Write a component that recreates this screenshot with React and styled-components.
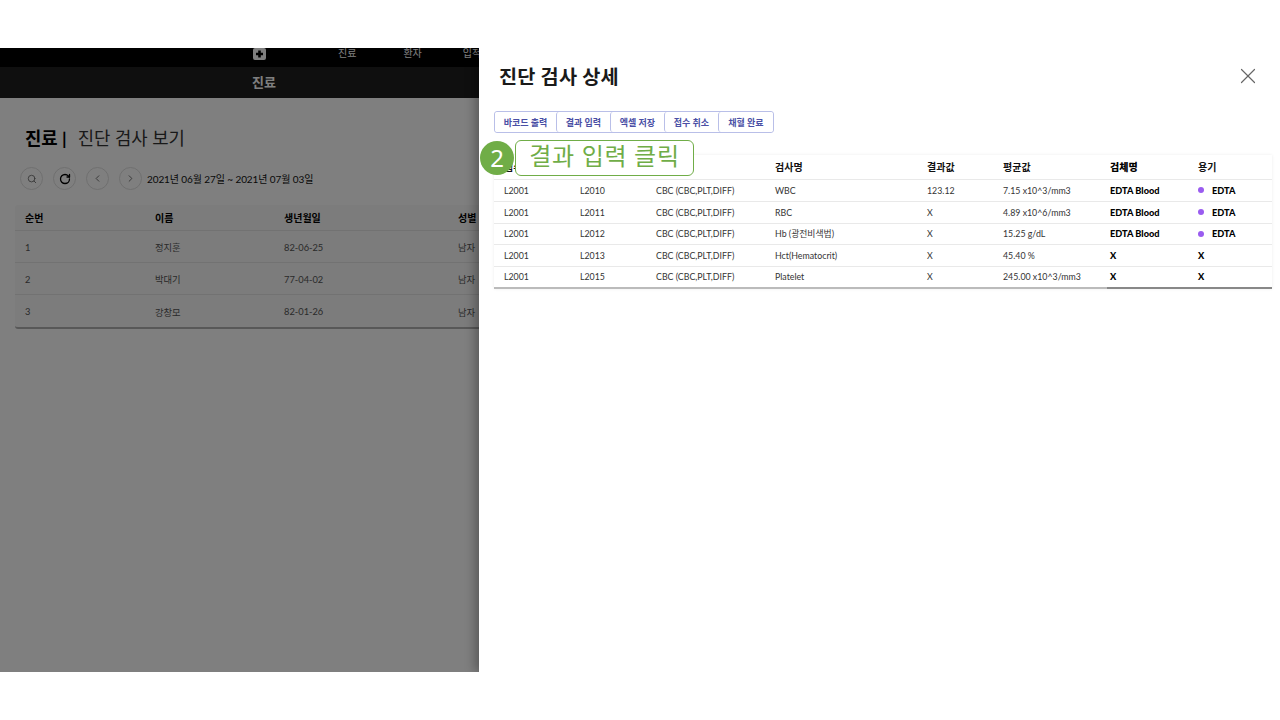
import React from 'react';
import styled, { createGlobalStyle } from 'styled-components';
import { Search, RotateCw, ChevronLeft, ChevronRight, X } from 'lucide-react';

const GlobalStyle = createGlobalStyle`
    html, body { margin: 0; padding: 0; background: #fff; }
    body { font-family: Lato, "Noto Sans CJK KR", sans-serif; }
`

const Stage = styled.div`
    position: relative;
    display: flex;
    width: 1280px;
    height: 624px;
    margin-top: 48px;
    overflow: hidden;
`

const Page = styled.div`
    position: relative;
    flex: 0 0 479px;
    overflow: hidden;
    background: #fff;
`

const Dim = styled.div`
    position: absolute;
    inset: 0;
    background: rgba(0, 0, 0, 0.5);
`

const TopNav = styled.div`
    display: flex;
    height: 19px;
    background: #000;
    color: #fff;
    font-size: 10px;
    line-height: 11px;
    width: 600px;
`

const NavIcon = styled.svg`
    margin: 0 0 0 253px;
    width: 13px;
    height: 12px;
`

const NavLink = styled.span`
    margin-left: ${p => p.$gap}px;
    white-space: nowrap;
`

const TitleBar = styled.div`
    height: 31px;
    width: 528px;
    background: #1f1f1f;
    color: #fff;
    font-size: 13px;
    font-weight: 700;
    line-height: 31px;
    text-align: center;
`

const PageBody = styled.div`
    padding: 26px 0 0 15px;
    width: 700px;
`

const Heading = styled.h2`
    margin: 0 0 0 10px;
    font-size: 17.8px;
    line-height: 28px;
    font-weight: 400;
    color: #333;
    b { font-weight: 700; color: #000; margin-right: 11px; }
`

const Controls = styled.div`
    display: flex;
    align-items: center;
    gap: 10px;
    margin: 15px 0 0 5px;
    font-size: 10px;
    color: #111;
`

const Round = styled.span`
    display: flex;
    align-items: center;
    justify-content: center;
    width: 23px;
    height: 23px;
    border: 1px solid #dedede;
    border-radius: 50%;
    color: ${p => p.$dark ? '#000' : '#666'};
    box-sizing: border-box;
`

const DateText = styled.span`
    margin-left: -5px;
    letter-spacing: -0.1px;
`

const ListTable = styled.div`
    margin-top: 15px;
    background: #f8f8f8;
    border-bottom: 2px solid #b0b0b0;
    border-radius: 3px;
    font-size: 9.3px;
    color: #555;
`

const ListRow = styled.div`
    display: grid;
    grid-template-columns: 130px 129px 174px 1fr;
    align-items: center;
    box-sizing: border-box;
    height: ${p => p.$head ? 26 : 32}px;
    padding-left: 10px;
    padding-top: ${p => p.$head ? 0 : 1}px;
    border-bottom: ${p => p.$last ? 0 : 1}px solid #e4e4e4;
    ${p => p.$head && 'color: #000; font-weight: 700; font-size: 10px;'}
`

const Drawer = styled.section`
    position: relative;
    flex: 1;
    background: #fff;
    box-shadow: -4px 0 10px rgba(0, 0, 0, 0.3);
    padding: 12px 8px 0 15px;
`

const DrawerHead = styled.header`
    display: flex;
    justify-content: space-between;
    align-items: center;
    height: 30px;
    padding: 0 11px 0 5px;
`

const DrawerTitle = styled.h1`
    margin: 0;
    font-size: 19.7px;
    font-weight: 700;
    color: #1a1a1a;
    letter-spacing: 0.2px;
`

const Close = styled.span`
    display: flex;
    margin-top: 2px;
    color: #666;
`

const ButtonGroup = styled.div`
    display: inline-flex;
    margin-top: 21px;
    border: 1px solid #b9bfe8;
    border-radius: 3px;
    height: 22px;
    box-sizing: border-box;
`

const GroupButton = styled.button`
    width: ${p => p.$w}px;
    padding: 0;
    background: #fff;
    border: 0;
    border-left: ${p => p.$first ? 0 : 1}px solid #b9bfe8;
    border-radius: 3px;
    color: #4a4fa5;
    font-family: inherit;
    font-size: 9px;
    font-weight: 700;
`

const DetailTable = styled.div`
    margin-top: 22px;
    font-size: 8.8px;
    color: #333;
    box-shadow: 0 0 3px rgba(0, 0, 0, 0.08);
`

const DetailRow = styled.div`
    position: relative;
    display: grid;
    grid-template-columns: 76px 76px 119px 152px 76px 107px 88px 1fr;
    align-items: center;
    height: ${p => p.$head ? 25 : 21.75}px;
    padding-left: 10px;
    border-bottom: 1px solid ${p => p.$last ? '#bbb' : '#e9e9e9'};
    ${p => p.$head && 'color: #111; font-weight: 700; font-size: 10px; padding-bottom: 2px;'}
    ${p => p.$last && 'border-bottom-width: 2px;'}
    box-sizing: border-box;
    ${p => p.$last && `
        &::after {
            content: "";
            position: absolute;
            right: 0;
            bottom: -2px;
            width: 165px;
            height: 2px;
            background: #888;
        }
    `}
`

const Strong = styled.span`
    color: #000;
    font-size: ${p => p.$head ? 10 : 9.2}px;
    font-weight: 900;
    display: flex;
    align-items: center;
`

const Dot = styled.i`
    width: 6px;
    height: 6px;
    border-radius: 50%;
    margin-right: 8px;
    background: #9a5cf0;
`

const Callout = styled.div`
    position: absolute;
    left: 1px;
    top: 92px;
    display: flex;
    align-items: center;
`

const Badge = styled.span`
    width: 34px;
    height: 34px;
    border-radius: 50%;
    background: #70ad47;
    color: #fff;
    font-family: "Noto Sans", sans-serif;
    font-size: 24px;
    line-height: 34px;
    text-align: center;
`

const CalloutText = styled.span`
    width: 179px;
    height: 36px;
    margin-left: 1px;
    border: 1px solid #70ad47;
    border-radius: 6px;
    background: #fff;
    color: #70ad47;
    box-sizing: border-box;
    font-size: 24px;
    font-weight: 400;
    line-height: 29px;
    text-align: center;
    letter-spacing: 0.7px;
    white-space: nowrap;
`

const patients = [
    ['1', '정지훈', '82-06-25', '남자'],
    ['2', '박대기', '77-04-02', '남자'],
    ['3', '강창모', '82-01-26', '남자'],
]

const buttons = [['바코드 출력', 61], ['결과 입력', 54], ['엑셀 저장', 54], ['접수 취소', 54], ['채혈 완료', 55]]

const panel = 'CBC (CBC,PLT,DIFF)'
const results = [
    ['L2001', 'L2010', panel, 'WBC', '123.12', '7.15 x10^3/mm3', 'EDTA Blood', 'EDTA'],
    ['L2001', 'L2011', panel, 'RBC', 'X', '4.89 x10^6/mm3', 'EDTA Blood', 'EDTA'],
    ['L2001', 'L2012', panel, 'Hb (광전비색법)', 'X', '15.25 g/dL', 'EDTA Blood', 'EDTA'],
    ['L2001', 'L2013', panel, 'Hct(Hematocrit)', 'X', '45.40 %', 'X', 'X'],
    ['L2001', 'L2015', panel, 'Platelet', 'X', '245.00 x10^3/mm3', 'X', 'X'],
]

function App() {
    return (
        <Stage>
            <GlobalStyle />
            <Page>
                <TopNav>
                    <NavIcon viewBox="0 0 13 12">
                        <path fillRule="evenodd" fill="#fff" d="M2 0h9a2 2 0 0 1 2 2v8a2 2 0 0 1-2 2H2a2 2 0 0 1-2-2V2a2 2 0 0 1 2-2zM5.2 2.5v2.2H3v2.6h2.2v2.2h2.6V7.3H10V4.7H7.8V2.5z" />
                    </NavIcon>
                    <NavLink $gap={72}>진료</NavLink>
                    <NavLink $gap={47}>환자</NavLink>
                    <NavLink $gap={41}>입적</NavLink>
                </TopNav>
                <TitleBar>진료</TitleBar>
                <PageBody>
                    <Heading><b>진료 |</b>진단 검사 보기</Heading>
                    <Controls>
                        <Round><Search size={10} /></Round>
                        <Round $dark><RotateCw size={12} strokeWidth={2.6} /></Round>
                        <Round><ChevronLeft size={11} /></Round>
                        <Round><ChevronRight size={11} /></Round>
                        <DateText>2021년 06월 27일 ~ 2021년 07월 03일</DateText>
                    </Controls>
                    <ListTable>
                        <ListRow $head>
                            <span>순번</span><span>이름</span><span>생년월일</span><span>성별</span>
                        </ListRow>
                        {patients.map((p, i) => (
                            <ListRow key={p[0]} $last={i === patients.length - 1}>
                                {p.map(v => <span key={v}>{v}</span>)}
                            </ListRow>
                        ))}
                    </ListTable>
                </PageBody>
                <Dim />
            </Page>
            <Drawer>
                <DrawerHead>
                    <DrawerTitle>진단 검사 상세</DrawerTitle>
                    <Close><X size={26} strokeWidth={1.1} /></Close>
                </DrawerHead>
                <ButtonGroup>
                    {buttons.map(([label, w], i) => (
                        <GroupButton key={label} $w={w} $first={i === 0}>{label}</GroupButton>
                    ))}
                </ButtonGroup>
                <DetailTable>
                    <DetailRow $head>
                        <span>접수번호</span><span>검사코드</span><span>묶음검사</span><span>검사명</span>
                        <span>결과값</span><span>평균값</span><Strong $head>검체명</Strong><span>용기</span>
                    </DetailRow>
                    {results.map((r, i) => (
                        <DetailRow key={r[1]} $last={i === results.length - 1}>
                            {r.slice(0, 6).map((v, j) => <span key={j}>{v}</span>)}
                            <Strong>{r[6]}</Strong>
                            <Strong>{r[7] === 'EDTA' && <Dot />}{r[7]}</Strong>
                        </DetailRow>
                    ))}
                </DetailTable>
                <Callout>
                    <Badge>2</Badge>
                    <CalloutText>결과 입력 클릭</CalloutText>
                </Callout>
            </Drawer>
        </Stage>
    );
}

export default App;
